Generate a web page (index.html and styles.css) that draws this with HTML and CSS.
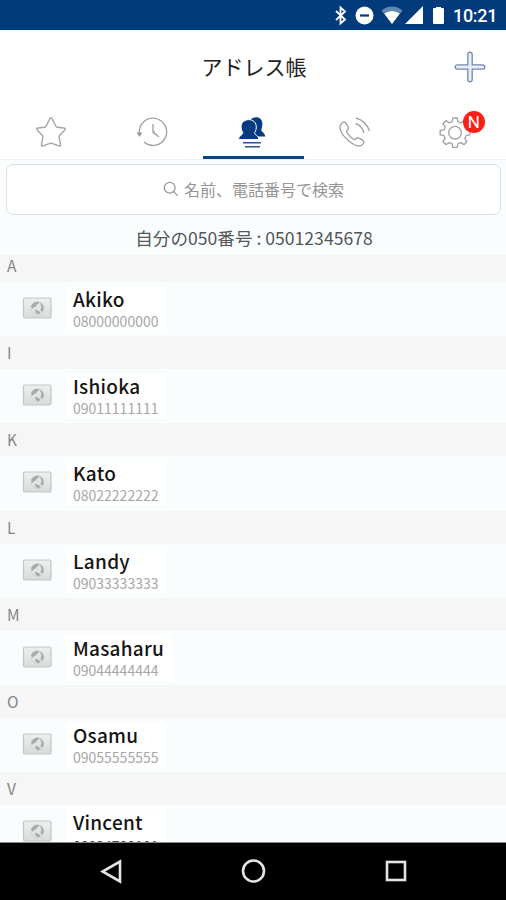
FILE: index.html
```html
<!DOCTYPE html>
<html lang="ja">
<head>
<meta charset="utf-8">
<title>アドレス帳</title>
<link rel="stylesheet" href="styles.css">
</head>
<body>
<svg width="0" height="0" class="defs">
  <defs>
    <linearGradient id="card" x1="0" y1="0" x2="0" y2="1"><stop offset="0" stop-color="#eeefef"/><stop offset="1" stop-color="#d9dada"/></linearGradient>
    <symbol id="globe" viewBox="0 0 30 22">
      <rect x="1.500" y="1" width="27.500" height="20" rx="1.500" fill="url(#card)" stroke="#c3c5c5" stroke-width="1.200"/>
      <circle cx="15.500" cy="11" r="6.300" fill="#e4e5e5" stroke="#cccdcd" stroke-width=".8"/>
      <path d="M9 9.500c1-3 3.500-4.800 7-4.800l1.500 1.300-2.500 1.500-1 2-2 .5-1 2zM18 5.500l2.500 2 1.300 3-.8 3.500-2 .5-.5-2.500 1-2zM13 12.500l4 1.500 1.500 2-2.500 1.500-2.500-2z" fill="#a9abac"/>
    </symbol>
  </defs>
</svg>
<div class="screen">
  <header class="status">
    <svg width="112" height="30" viewBox="0 0 112 30">
      <path d="M3 11l9 8.500-4.500 4v-16l4.500 4-9 8.500" fill="none" stroke="#fff" stroke-width="1.800"/>
      <circle cx="31.500" cy="15.500" r="9" fill="#fff"/><path d="M27 15.500h9" stroke="#023b7b" stroke-width="2.200"/>
      <path d="M48.500 10.500q10.500-8 21 0L59 24z" fill="#6488b0"/><path d="M51.300 13.500q7.700-5 15.400 0L59 24z" fill="#fff"/>
      <path d="M90 6v18H72z" fill="#fff"/>
      <path d="M101 8h2V7h5v1h2q1 0 1 1v14q0 1-1 1h-9q-1 0-1-1V9q0-1 1-1z" fill="#fff"/>
    </svg>
    <span class="clock">10:21</span>
  </header>
  <div class="titlebar">
    <h1>アドレス帳</h1>
    <svg class="add" width="32" height="32" viewBox="0 0 32 32"><path d="M13.800 13.800V3.500q0-2.300 2.200-2.300t2.200 2.300v10.300h10.300q2.300 0 2.300 2.200t-2.300 2.200H18.200v10.300q0 2.300-2.200 2.300t-2.200-2.300V18.200H3.500q-2.300 0-2.300-2.200t2.300-2.200z" fill="#e7eef8" stroke="#7488ad" stroke-width="1.300"/></svg>
  </div>
  <nav class="tabs">
    <a class="tab"><svg width="32" height="32" viewBox="0 0 32 32"><path d="M16 2q.8 0 1.300 1l3.600 7.300q.4.800 1.300.9l6.800.8q2.200.4.700 2.200l-5.200 5.200q-.6.600-.4 1.500l1.400 7.700q.2 2-1.600 1.200L17 27.300q-1-.5-2 0l-6.900 2.500q-1.800.8-1.600-1.200l1.400-7.700q.2-.9-.4-1.500L2.300 14.200Q.8 12.400 3 12l6.800-.8q.9-.1 1.300-.9L14.700 3q.5-1 1.300-1z"/></svg></a>
    <a class="tab"><svg width="32" height="32" viewBox="0 0 32 32"><path d="M3.500 17.500A13.600 13.600 0 1 1 8 26"/><path d="M.500 16.500h6l-3 4.500z" class="tip"/><path d="M17 8v8.500l6 4.500M18 15v2l3 2"/></svg></a>
    <a class="tab active"><svg width="32" height="32" viewBox="0 0 32 32">
      <path d="M14 3q2.500-2 6-1.800c4 .5 6 4 5.200 8.800-.3 2-1 3-.7 4.500.5 1.800 3.300 2.500 3.800 6H17z" class="solid"/>
      <path d="M1.500 23.500c.2-4.500 4.500-4 4.200-7C4.200 13.500 2.500 8.500 6.800 5.200c3.500-2.500 9-2 11.300 1.500 2.200 3.500 1 7.300-.3 9.800-.4 3 3.900 2.500 4.100 7z" class="solid front"/>
      <path d="M6 26.800h18M8 30.800h15" class="line"/></svg></a>
    <a class="tab"><svg width="32" height="32" viewBox="0 0 32 32"><path d="M3.500 7.500q2.500-3 4.800 0L10 10.700q1 2-.7 3.300-1.500 1.200 0 3.200 2.500 3.500 5.500 5.600 2 1.300 3.200 0 1.600-1.800 3.500-.5l3 1.900q2.500 1.800.4 4-4.200 4-11.400-1.200Q6.500 22 3.200 16 .500 11 3.500 7.500zM17.500 7.500q6.500 2 8.500 9.500M18 2q10 3 13.500 13"/></svg></a>
    <a class="tab"><svg width="32" height="32" viewBox="0 0 32 32"><path d="M13.200 5.600L13.800 2h4.400l.6 3.600 3 1.200L25 4.700 28 7.800l-2.100 3.100 1.200 3 3.700.6v4.400l-3.700.6-1.200 3 2.100 3.100-3 3.100-3.200-2.100-3 1.200-.6 3.700h-4.400l-.6-3.700-3-1.200L7 28.700l-3-3.100 2.100-3.100-1.200-3-3.700-.6v-4.400l3.700-.6 1.200-3L4 7.800l3-3.100 3.200 2.100z" stroke-linejoin="round"/><circle cx="16" cy="16.700" r="6.300"/></svg><span class="badge">N</span></a>
  </nav>
  <main>
    <div class="search"><svg width="16" height="16" viewBox="0 0 16 16"><circle cx="6.700" cy="6.700" r="5.400"/><path d="M10.600 10.600l4 4"/></svg><span>名前、電話番号で検索</span></div>
    <div class="mine"><span>自分の050番号 : 05012345678</span></div>
    <h2 class="first">A</h2>
    <div class="row"><svg><use href="#globe"/></svg><div class="person"><b>Akiko</b><span>08000000000</span></div></div>
    <h2>I</h2>
    <div class="row"><svg><use href="#globe"/></svg><div class="person"><b>Ishioka</b><span>09011111111</span></div></div>
    <h2>K</h2>
    <div class="row"><svg><use href="#globe"/></svg><div class="person"><b>Kato</b><span>08022222222</span></div></div>
    <h2>L</h2>
    <div class="row"><svg><use href="#globe"/></svg><div class="person"><b>Landy</b><span>09033333333</span></div></div>
    <h2>M</h2>
    <div class="row"><svg><use href="#globe"/></svg><div class="person"><b>Masaharu</b><span>09044444444</span></div></div>
    <h2>O</h2>
    <div class="row"><svg><use href="#globe"/></svg><div class="person"><b>Osamu</b><span>09055555555</span></div></div>
    <h2>V</h2>
    <div class="row"><svg><use href="#globe"/></svg><div class="person"><b>Vincent</b><span class="dark">08034789101</span></div></div>
  </main>
  <footer class="softkeys">
    <svg width="24" height="26" viewBox="0 0 24 26"><path d="M20 2.500v20L2.500 12.500z"/></svg>
    <svg width="26" height="26" viewBox="0 0 26 26"><circle cx="12.500" cy="12" r="10.500"/></svg>
    <svg width="24" height="26" viewBox="0 0 24 26"><rect x="3" y="3" width="18" height="18"/></svg>
  </footer>
</div>
</body>
</html>
```
FILE: styles.css
```css
* { box-sizing: border-box; }
body { margin: 0; font-family: "Noto Sans CJK JP", "Noto Sans", sans-serif; }
.defs { position: absolute; }
.screen { width: 506px; height: 900px; display: flex; flex-direction: column; overflow: hidden; background: #fff; }
.status { height: 30px; flex: none; background: #023b7b; display: flex; justify-content: flex-end; padding-right: 10px; color: #fff; }
.status svg { margin-right: 8px; width: 112px; }
.clock { font: 500 18px/32px Roboto, sans-serif; width: 43px; letter-spacing: -.3px; white-space: nowrap; }
.titlebar { height: 74px; flex: none; display: grid; grid-template-columns: 54px 1fr 54px; align-items: center; }
h1 { grid-column: 2; margin: 0 0 3px 2px; text-align: center; font-size: 21px; line-height: 30px; font-weight: 400; color: #222; }
.add { margin-left: 2px; }
.tabs { height: 55px; flex: none; display: grid; grid-template-columns: repeat(5, 1fr); }
.tab { position: relative; display: flex; justify-content: center; align-items: center; }
.tab svg { fill: none; stroke: #a4a4a4; stroke-width: 1.4; }
.tab .tip { fill: #999; stroke: none; }
.tab.active { border-bottom: 3px solid #0b4382; padding-top: 3px; margin-left: 1px; }
.tab .solid { fill: #063b81; stroke: none; }
.tab .front { stroke: #fff; stroke-width: 1; }
.tab .line { stroke: #28558e; stroke-width: 1.6; }
.badge { position: absolute; left: 58px; top: 7px; width: 22px; height: 22px; border-radius: 50%; background: #fb1f18; color: #fff; font: 400 17px/23px Roboto, sans-serif; text-align: center; }
main { height: 683px; flex: none; overflow: hidden; background: #fafdfe; border-top: 1px solid #eeefef; padding-top: 4px; }
.search { margin: 0 5px 0 6px; height: 51px; border: 1.5px solid #dedfe0; border-radius: 7px; background: #fff; display: flex; align-items: center; justify-content: center; gap: 5px; color: #959595; font-size: 16px; line-height: 24px; padding-bottom: 2px; }
.search svg { fill: none; stroke: #999; stroke-width: 1.3; }
.mine { height: 40px; padding-left: 2px; text-align: center; font-size: 17.6px; line-height: 46px; color: #555; white-space: nowrap; }
h2 { margin: 0; height: 33px; padding-left: 7px; background: #f6f6f6; color: #858585; font-size: 15.5px; line-height: 32px; font-weight: 400; }
.first { height: 27px; line-height: 20px; }
.row { height: 54.2px; display: flex; align-items: flex-start; }
.row > svg { width: 30px; height: 22px; margin: 15px 14px 0 22px; flex: none; }
.person { height: 46px; margin-top: 4px; padding: 0 8px 0 7px; background: #fff; display: flex; flex-direction: column; }
.person b { font-size: 19px; line-height: 26px; font-weight: 500; color: #151515; letter-spacing: .25px; }
.person span { font-size: 14px; line-height: 18px; color: #a6a6a6; }
.person .dark { color: #444; padding-top: 2px; }
.softkeys { height: 58px; flex: none; border-top: 1px solid #888; background: #000; display: flex; justify-content: space-between; padding: 16px 98px 0 100px; }
.softkeys svg { fill: none; stroke: #e5e5e5; stroke-width: 2.6; }
```
